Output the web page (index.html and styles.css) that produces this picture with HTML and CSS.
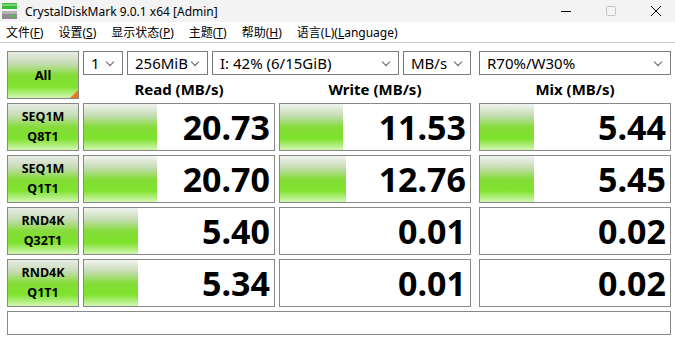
FILE: index.html
```html
<!DOCTYPE html>
<html lang="zh-CN">
<head>
  <meta charset="UTF-8">
  <title>CrystalDiskMark 9.0.1 x64 [Admin]</title>
  <link rel="stylesheet" href="styles.css">
</head>
<body>

<div class="titlebar">
  <svg class="app-icon" width="16" height="16" viewBox="0 0 16 16">
    <rect x="0" y="0" width="15" height="6" fill="#3cb83c"/>
    <rect x="0" y="1" width="15" height="2" fill="#6fd86f"/>
    <rect x="0" y="8" width="15" height="8" fill="#8c8c8c"/>
    <rect x="0" y="8" width="15" height="3" fill="#b4b4b4"/>
    <rect x="9" y="12" width="4" height="2" fill="#4cd04c"/>
  </svg>
  <span class="title">CrystalDiskMark 9.0.1 x64 [Admin]</span>
  <div class="controls">
    <svg width="12" height="12" viewBox="0 0 12 12"><line x1="1" y1="6.5" x2="11" y2="6.5" stroke="#000" stroke-width="1"/></svg>
    <svg width="12" height="12" viewBox="0 0 12 12"><rect x="1.5" y="1.5" width="9" height="9" rx="1" fill="none" stroke="#c4c4c4"/></svg>
    <svg width="12" height="12" viewBox="0 0 12 12"><path d="M1 1 L11 11 M11 1 L1 11" stroke="#000" stroke-width="1"/></svg>
  </div>
</div>

<div class="menubar">
  <span>文件(<u>F</u>)</span>
  <span>设置(<u>S</u>)</span>
  <span>显示状态(<u>P</u>)</span>
  <span>主题(<u>T</u>)</span>
  <span>帮助(<u>H</u>)</span>
  <span>语言(L)(<u>L</u>anguage)</span>
</div>

<div class="main">
  <div class="grid">
    <div class="btn btn-all">All</div>

    <div class="combos">
      <div class="combo c-count">1</div>
      <div class="combo c-size">256MiB</div>
      <div class="combo c-drive">I: 42% (6/15GiB)</div>
      <div class="combo c-unit">MB/s</div>
      <div class="combo c-mix">R70%/W30%</div>
    </div>

    <div class="head">Read (MB/s)</div>
    <div class="head">Write (MB/s)</div>
    <div class="head">Mix (MB/s)</div>

    <div class="btn">SEQ1M<br>Q8T1</div>
    <div class="box"><div class="bar" style="width: 73px"></div><span>20.73</span></div>
    <div class="box"><div class="bar" style="width: 63px"></div><span>11.53</span></div>
    <div class="box"><div class="bar" style="width: 54px"></div><span>5.44</span></div>

    <div class="btn">SEQ1M<br>Q1T1</div>
    <div class="box"><div class="bar" style="width: 73px"></div><span>20.70</span></div>
    <div class="box"><div class="bar" style="width: 66px"></div><span>12.76</span></div>
    <div class="box"><div class="bar" style="width: 54px"></div><span>5.45</span></div>

    <div class="btn">RND4K<br>Q32T1</div>
    <div class="box"><div class="bar" style="width: 54px"></div><span>5.40</span></div>
    <div class="box"><span>0.01</span></div>
    <div class="box"><span>0.02</span></div>

    <div class="btn">RND4K<br>Q1T1</div>
    <div class="box"><div class="bar" style="width: 54px"></div><span>5.34</span></div>
    <div class="box"><span>0.01</span></div>
    <div class="box"><span>0.02</span></div>

    <div class="status"></div>
  </div>
</div>

</body>
</html>
```

FILE: styles.css
```css
body {
  margin: 0;
  background: #fff;
  color: #000;
  font-family: "Noto Sans", "Noto Sans CJK SC", sans-serif;
  width: 675px;
  height: 338px;
  overflow: hidden;
}

.titlebar {
  height: 22px;
  background: #f3f3f3;
  display: flex;
  align-items: center;
  font-size: 12px;
}
.app-icon {
  margin: 0 7px 0 2px;
}
.title {
  flex: 1;
  padding-top: 1px;
}
.controls {
  display: flex;
  gap: 33px;
  margin-right: 13px;
}

.menubar {
  height: 20px;
  border-bottom: 1px solid #c8c8c8;
  display: flex;
  align-items: center;
  font-size: 12px;
  padding-left: 6px;
  gap: 15px;
}
.menubar u {
  text-underline-offset: 1px;
}

.main {
  padding: 8px 0 0 7px;
}
.grid {
  display: grid;
  grid-template-columns: 72px 196px 196px 200px;
  grid-template-rows: 24px 20px repeat(4, 48px) 24px;
  row-gap: 4px;
}

.btn {
  box-sizing: border-box;
  border: 1px solid #888;
  background: linear-gradient(#e8ebe5 0%, #c6dcb4 25%, #86dc3a 50%, #7ee22c 75%, #d2f6b4 100%);
  display: flex;
  align-items: center;
  justify-content: center;
  text-align: center;
  font-weight: bold;
  font-size: 12.5px;
  line-height: 20px;
}
.btn-all {
  grid-row: 1 / span 2;
  position: relative;
  font-size: 13px;
}
.btn-all::after {
  content: "";
  position: absolute;
  right: 0;
  bottom: 0;
  border-style: solid;
  border-width: 0 0 8px 8px;
  border-color: transparent transparent #f07818 transparent;
}

.combos {
  grid-column: 2 / span 3;
  display: flex;
  gap: 4px;
  padding-left: 4px;
}
.combo {
  box-sizing: border-box;
  height: 24px;
  border: 1px solid #7a7a7a;
  font-size: 15px;
  line-height: 22px;
  padding-left: 7px;
  position: relative;
  white-space: nowrap;
}
.combo::after {
  content: "";
  position: absolute;
  right: 9px;
  top: 7px;
  width: 5px;
  height: 5px;
  border-right: 1px solid #606060;
  border-bottom: 1px solid #606060;
  transform: rotate(45deg);
}
.c-count { width: 40px; }
.c-size { width: 81px; }
.c-drive { width: 187px; }
.c-unit { width: 68px; }
.c-mix { width: 192px; margin-left: 4px; }

.head {
  width: 192px;
  justify-self: end;
  text-align: center;
  font-weight: bold;
  font-size: 15px;
  line-height: 20px;
}

.box {
  box-sizing: border-box;
  width: 192px;
  justify-self: end;
  border: 1px solid #888;
  display: flex;
  align-items: center;
  position: relative;
}
.bar {
  align-self: stretch;
  background: linear-gradient(#f2f4f0 0%, #c6dcb4 25%, #86dc3a 50%, #7ee22c 75%, #d2f6b4 100%);
}
.box span {
  margin-left: auto;
  padding-right: 4px;
  font-weight: bold;
  font-size: 34px;
  line-height: 1;
  position: absolute;
  right: 0;
}

.status {
  grid-column: 1 / -1;
  border: 1px solid #888;
}
```
